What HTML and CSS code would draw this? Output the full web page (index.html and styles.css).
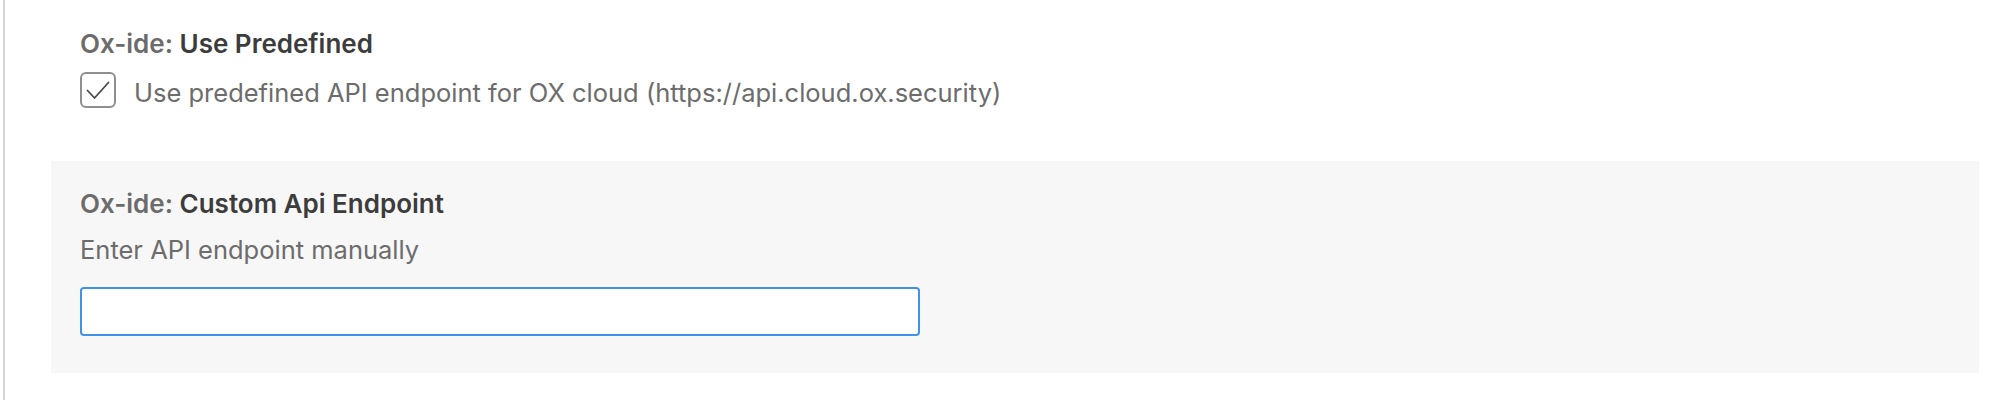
FILE: index.html
```html
<!DOCTYPE html>
<html lang="en">
<head>
<meta charset="utf-8">
<title>Settings</title>
<link rel="stylesheet" href="styles.css">
</head>
<body>
<div class="editor">
  <div class="setting setting-bool">
    <div class="setting-title"><span class="cat">Ox-ide: </span><span class="label">Use Predefined</span></div>
    <label class="bool-row">
      <span class="checkbox">
        <svg width="32" height="32" viewBox="0 0 32 32"><path d="M5.5 16.5 L12.5 24 L26.5 8.5" fill="none" stroke="#4a4a4a" stroke-width="1.8" stroke-linecap="round" stroke-linejoin="round"/></svg>
      </span>
      <span class="desc desc-bool">Use predefined API endpoint for OX cloud (https://api.cloud.ox.security)</span>
    </label>
  </div>
  <div class="setting setting-focused">
    <div class="setting-title"><span class="cat">Ox-ide: </span><span class="label">Custom Api Endpoint</span></div>
    <div class="desc desc-block">Enter API endpoint manually</div>
    <input class="text-input" type="text">
  </div>
</div>
</body>
</html>
```
FILE: styles.css
```css
html, body {
  margin: 0;
  padding: 0;
  background: #ffffff;
}
body {
  font-family: Inter, "Noto Sans", "Liberation Sans", sans-serif;
}
.editor {
  margin-left: 3px;
  border-left: 2px solid #d6d6d6;
  height: 400px;
  box-sizing: border-box;
  padding: 1px 19px 0 46px;
}
.setting {
  padding: 25px 29px 37px;
}
.setting-bool {
  height: 160px;
  box-sizing: border-box;
}
.setting-focused {
  background: #f7f7f7;
}
.setting-title {
  font-size: 26px;
  line-height: 36px;
  font-weight: 600;
  white-space: nowrap;
}
.cat {
  color: #6b6b6b;
}
.label {
  color: #3c3c3c;
}
.bool-row {
  display: flex;
  align-items: flex-start;
  margin-top: 5px;
}
.checkbox {
  flex: none;
  width: 36px;
  height: 36px;
  box-sizing: border-box;
  border: 2px solid #8f8f8f;
  border-radius: 6px;
  margin-top: 5px;
  margin-right: 18px;
  display: flex;
  align-items: center;
  justify-content: center;
  background: #ffffff;
}
.checkbox svg {
  display: block;
}
.desc {
  font-size: 25.5px;
  line-height: 36px;
  color: #6c6c6c;
  white-space: nowrap;
}
.desc-bool {
  margin-top: 8px;
}
.desc-block {
  margin-top: 10px;
}
.text-input {
  display: block;
  margin: 19px 0 0;
  width: 840px;
  height: 49px;
  box-sizing: border-box;
  border: 2px solid #4290e8;
  border-radius: 4px;
  background: #ffffff;
  outline: none;
  padding: 0 8px;
  font-size: 26px;
}
```
